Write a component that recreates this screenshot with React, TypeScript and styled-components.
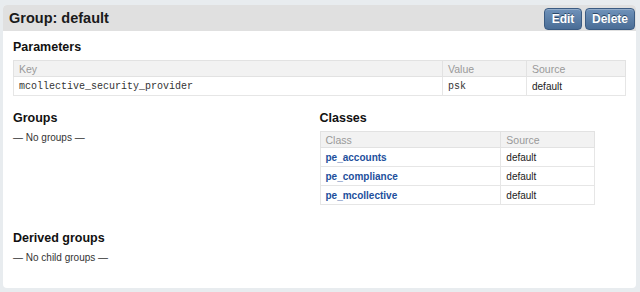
import React from 'react';
import styled, { createGlobalStyle } from 'styled-components';

type Param = { key: string; value: string; source: string };
type Klass = { name: string; source: string };

const params: Param[] = [
  { key: 'mcollective_security_provider', value: 'psk', source: 'default' },
];

const classes: Klass[] = [
  { name: 'pe_accounts', source: 'default' },
  { name: 'pe_compliance', source: 'default' },
  { name: 'pe_mcollective', source: 'default' },
];

const GlobalStyle = createGlobalStyle`
  html, body {
    margin: 0;
    padding: 0;
    background: #e8ecef;
    font-family: "Liberation Sans", Arial, sans-serif;
    color: #222;
  }
`;

const Page = styled.div`
  padding: 5px 4px 4px 3px;
`;

const Panel = styled.div`
  background: #fff;
  border-radius: 4px;
  height: 283px;
  box-sizing: border-box;
  overflow: hidden;
`;

const Header = styled.div`
  display: flex;
  align-items: center;
  justify-content: space-between;
  height: 26px;
  padding: 0 1px 0 6px;
  background: #e0e0e0;
`;

const Title = styled.h1`
  margin: 0;
  font-size: 14.5px;
  font-weight: bold;
  color: #1a1a1a;
`;

const Actions = styled.div`
  display: flex;
  gap: 3px;
  margin-top: 1px;
`;

const Button = styled.button<{ $w: number }>`
  width: ${({ $w }) => $w}px;
  height: 22px;
  padding: 0;
  border: 1px solid #3b5b82;
  border-radius: 4px;
  background: linear-gradient(#6f92ba, #4a6d96);
  color: #fff;
  font-family: "Liberation Sans", Arial, sans-serif;
  font-size: 12px;
  font-weight: bold;
  text-shadow: 0 -1px 0 #2c4868;
  box-shadow: inset 0 1px 0 rgba(255, 255, 255, 0.25);
`;

const Body = styled.div`
  padding: 8px 10px 0 10px;
`;

const Section = styled.section<{ $gap: number }>`
  margin-bottom: ${({ $gap }) => $gap}px;
`;

const Heading = styled.h3`
  margin: 0 0 5px 0;
  font-size: 12.5px;
  line-height: 16px;
  font-weight: bold;
  color: #111;
`;

const Columns = styled.div`
  display: grid;
  grid-template-columns: 1fr 1fr;
`;

const Empty = styled.p`
  margin: 0;
  font-size: 10px;
  line-height: 14px;
  color: #333;
`;

const Table = styled.table<{ $width: string }>`
  width: ${({ $width }) => $width};
  border-collapse: collapse;
  border: 1px solid #e2e2e2;
  font-size: 10px;
`;

const Th = styled.th<{ $w?: number }>`
  box-sizing: border-box;
  width: ${({ $w }) => ($w ? `${$w}px` : 'auto')};
  height: 16px;
  padding: 0 5px;
  background: #f2f2f2;
  border: 1px solid #e2e2e2;
  color: #999;
  font-size: 10.5px;
  font-weight: normal;
  text-align: left;
`;

const Td = styled.td`
  height: 18px;
  padding: 0 5px;
  border: 1px solid #e6e6e6;
  color: #222;
`;

const Code = styled(Td)`
  font-family: "Liberation Mono", "Courier New", monospace;
  font-size: 10px;
  color: #333;
`;

const LinkCell = styled(Td)`
  a {
    color: #1d4f9c;
    font-weight: bold;
    text-decoration: none;
  }
`;

export default function App() {
  return (
    <Page>
      <GlobalStyle />
      <Panel>
        <Header>
          <Title>Group: default</Title>
          <Actions>
            <Button $w={38}>Edit</Button>
            <Button $w={50}>Delete</Button>
          </Actions>
        </Header>
        <Body>
          <Section $gap={14}>
            <Heading>Parameters</Heading>
            <Table $width="100%">
              <thead>
                <tr>
                  <Th>Key</Th>
                  <Th $w={84}>Value</Th>
                  <Th $w={99}>Source</Th>
                </tr>
              </thead>
              <tbody>
                {params.map((p) => (
                  <tr key={p.key}>
                    <Code>{p.key}</Code>
                    <Code>{p.value}</Code>
                    <Td>{p.source}</Td>
                  </tr>
                ))}
              </tbody>
            </Table>
          </Section>
          <Section $gap={25}>
            <Columns>
              <div>
                <Heading>Groups</Heading>
                <Empty>— No groups —</Empty>
              </div>
              <div>
                <Heading>Classes</Heading>
                <Table $width="90%">
                  <thead>
                    <tr>
                      <Th>Class</Th>
                      <Th $w={94}>Source</Th>
                    </tr>
                  </thead>
                  <tbody>
                    {classes.map((c) => (
                      <tr key={c.name}>
                        <LinkCell>
                          <a href="#">{c.name}</a>
                        </LinkCell>
                        <Td>{c.source}</Td>
                      </tr>
                    ))}
                  </tbody>
                </Table>
              </div>
            </Columns>
          </Section>
          <Section $gap={0}>
            <Heading>Derived groups</Heading>
            <Empty>— No child groups —</Empty>
          </Section>
        </Body>
      </Panel>
    </Page>
  );
}
